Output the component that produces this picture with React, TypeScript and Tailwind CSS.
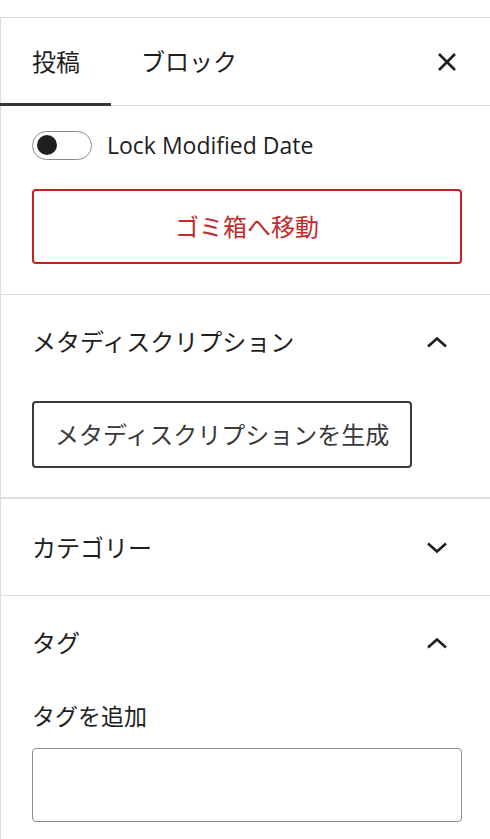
import React from "react";

const font = { fontFamily: '"Noto Sans", "Noto Sans CJK JP", sans-serif' };

function ChevronUp() {
  return (
    <svg width="22" height="14" viewBox="0 0 22 14" fill="none">
      <path d="M2 11.5 L11 3.5 L20 11.5" stroke="#1e1e1e" strokeWidth="2.6" />
    </svg>
  );
}
function ChevronDown() {
  return (
    <svg width="22" height="14" viewBox="0 0 22 14" fill="none">
      <path d="M2 2.5 L11 10.5 L20 2.5" stroke="#1e1e1e" strokeWidth="2.6" />
    </svg>
  );
}

function SectionHeader({ title, open }: { title: string; open: boolean }) {
  return (
    <div className="flex items-center justify-between pl-[31px] pr-[42px] h-[48px]">
      <span className="text-[24px] text-[#1e1e1e] leading-none">{title}</span>
      {open ? <ChevronUp /> : <ChevronDown />}
    </div>
  );
}

export default function App() {
  return (
    <div className="w-[490px] h-[839px] bg-white overflow-hidden" style={font}>
      <div className="h-[18px] border-b border-[#dddddd]" />
      <div className="border-l border-[#dddddd] h-[821px]">
        {/* tabs */}
        <div className="flex items-stretch h-[88px] border-b border-[#dddddd] relative">
          <div className="relative flex items-center pl-[31px] w-[110px]">
            <span className="text-[24px] text-[#1e1e1e] leading-none">投稿</span>
            <div className="absolute left-[-1px] right-0 bottom-[-1px] h-[3px] bg-[#3a3733]" />
          </div>
          <div className="flex items-center pl-[30px]">
            <span className="text-[24px] text-[#1e1e1e] leading-none">ブロック</span>
          </div>
          <div className="flex-1" />
          <div className="flex items-center pr-[33px]">
            <svg width="20" height="20" viewBox="0 0 20 20" fill="none">
              <path d="M2 2 L18 18 M18 2 L2 18" stroke="#1e1e1e" strokeWidth="2.6" />
            </svg>
          </div>
        </div>

        {/* status section */}
        <div className="border-b border-[#dddddd] pt-[25px] pb-[30px] pl-[31px] pr-[28px]">
          <div className="flex items-center h-[28px]">
            <div className="w-[60px] h-[29px] rounded-full border border-[#8a8a8a] flex items-center pl-[4px]">
              <div className="w-[20px] h-[20px] rounded-full bg-[#1e1e1e]" />
            </div>
            <span className="ml-[15px] text-[23px] text-[#1e1e1e] leading-none" style={{ fontFamily: '"Open Sans", "Noto Sans", sans-serif' }}>
              Lock Modified Date
            </span>
          </div>
          <div className="mt-[30px] h-[75px] border-2 border-[#c42222] rounded-[4px] flex items-center justify-center">
            <span className="text-[24px] text-[#c12b2b] leading-none">ゴミ箱へ移動</span>
          </div>
        </div>

        {/* meta description */}
        <div className="border-b-2 border-[#dddddd] pt-[23px] pb-[29px]">
          <SectionHeader title="メタディスクリプション" open={true} />
          <div className="pl-[31px] mt-[35px]">
            <div className="inline-flex items-center h-[67px] px-[21px] border-2 border-[#3a3a3a] rounded-[4px]">
              <span className="text-[24px] text-[#3a3a3a] leading-none">メタディスクリプションを生成</span>
            </div>
          </div>
        </div>

        {/* category */}
        <div className="border-b border-[#dddddd] pt-[25px] pb-[23px]">
          <SectionHeader title="カテゴリー" open={false} />
        </div>

        {/* tags */}
        <div className="pt-[23px]">
          <SectionHeader title="タグ" open={true} />
          <div className="pl-[31px] pr-[28px] mt-[38px]">
            <div className="text-[23px] text-[#1e1e1e] leading-none">タグを追加</div>
            <div className="mt-[20px] h-[74px] border border-[#8c8c8c] rounded-[4px]" />
          </div>
        </div>
      </div>
    </div>
  );
}
